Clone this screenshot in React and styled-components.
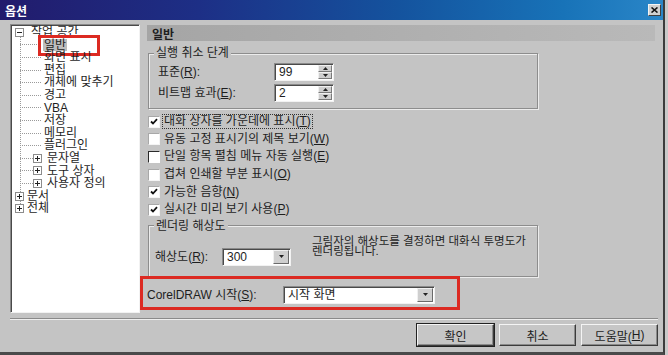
import React from 'react'
import styled, { createGlobalStyle } from 'styled-components'

const GlobalStyle = createGlobalStyle`
    html, body {
        margin: 0;
        padding: 0;
        background: #c9c9c9;
    }
    body {
        font-family: "Liberation Sans", "Noto Sans CJK KR", sans-serif;
        color: #1e1e1e;
    }
`

const Window = styled.div`
    width: 665px;
    height: 355px;
    box-sizing: border-box;
    background: #c4c4c4;
    border-right: 2px solid #3c3c3c;
    border-bottom: 3px solid #4a4a4a;
    display: flex;
    flex-direction: column;
    overflow: hidden;
`

const TitleBar = styled.div`
    height: 20px;
    flex: none;
    display: flex;
    align-items: center;
    justify-content: space-between;
    padding: 0 2px 0 5px;
    background: linear-gradient(90deg, #221b6c 0%, #1d2f86 30%, #14539e 60%, #1873b8 85%, #2a86c8 100%);
    color: #fff;
    font-size: 12px;
    font-weight: bold;
`

const CloseButton = styled.div`
    width: 13px;
    height: 12px;
    box-sizing: border-box;
    background: #d0d0d0;
    border: 1px solid;
    border-color: #f4f4f4 #404040 #404040 #f4f4f4;
    display: flex;
    align-items: center;
    justify-content: center;
`

const Body = styled.div`
    display: flex;
    padding: 4px 8px 0 10px;
`

const Tree = styled.div`
    width: 130px;
    height: 289px;
    flex: none;
    box-sizing: border-box;
    background: #fff;
    border: 1px solid;
    border-color: #8a8a8a #f2f2f2 #f2f2f2 #8a8a8a;
    box-shadow: inset 1px 1px 0 #4a4a4a;
    padding-top: 1px;
    font-size: 12px;
    line-height: 12.6px;
`

const TreeRow = styled.div`
    height: 12.6px;
    display: flex;
    align-items: center;
    padding-left: ${p => p.$indent}px;
    white-space: nowrap;
`

const TreeChildren = styled.div`
    position: relative;
    &::before {
        content: '';
        position: absolute;
        left: 9px;
        top: -2px;
        bottom: -20px;
        border-left: 1px dotted #9a9a9a;
    }
`

const Connector = styled.span`
    width: ${p => p.$width}px;
    flex: none;
    border-top: 1px dotted #9a9a9a;
`

const ExpanderBox = styled.span`
    width: 9px;
    height: 9px;
    flex: none;
    box-sizing: border-box;
    border: 1px solid #8c8c8c;
    background: #fff;
    display: flex;
    align-items: center;
    justify-content: center;
    position: relative;
    z-index: 1;
`

const TreeLabel = styled.span`
    margin-left: ${p => p.$gap}px;
    padding: 0 1px;
    position: relative;
    background: ${p => (p.$selected ? '#bdbdbd' : 'transparent')};
    ${p => p.$selected && `
        &::after {
            content: '';
            position: absolute;
            left: -5px;
            top: -4px;
            width: 62px;
            height: 21px;
            box-sizing: border-box;
            border: 3px solid #dc2a22;
        }
    `}
`

const Panel = styled.div`
    flex: 1;
    margin-left: 7px;
    font-size: 12px;
`

const Header = styled.div`
    height: 16px;
    margin-top: 1px;
    padding-left: 5px;
    display: flex;
    align-items: center;
    background: linear-gradient(90deg, #a5a5a5, #b9b9b9);
    font-weight: bold;
`

const Group = styled.fieldset`
    width: 390px;
    box-sizing: border-box;
    margin: ${p => p.$top}px 0 0 1px;
    padding: 0 0 ${p => p.$bottom}px ${p => p.$left}px;
    border: 1px solid #8d8d8d;
    box-shadow: 1px 1px 0 #ececec, inset 1px 1px 0 #ececec;
`

const Legend = styled.legend`
    padding: 0 2px;
    margin-left: ${p => p.$offset}px;
    background: #c4c4c4;
    line-height: 14px;
    font-size: 12px;
`

const FieldRow = styled.div`
    display: flex;
    align-items: ${p => (p.$top === 0 ? 'flex-start' : 'center')};
    margin-top: ${p => p.$top}px;
`

const FieldLabel = styled.span`
    width: ${p => p.$width}px;
    flex: none;
    line-height: 14px;
`

const Sunken = styled.div`
    width: ${p => p.$width}px;
    height: 18px;
    box-sizing: border-box;
    display: flex;
    background: #fff;
    border: 1px solid;
    border-color: #8a8a8a #f2f2f2 #f2f2f2 #8a8a8a;
    box-shadow: inset 1px 1px 0 #4a4a4a;
    padding: 1px 1px 0 1px;
`

const FieldValue = styled.span`
    flex: 1;
    padding-left: 3px;
    line-height: 15px;
    font-size: 12px;
`

const SpinBox = styled.div`
    width: 14px;
    flex: none;
    display: flex;
    flex-direction: column;
    margin-bottom: 1px;
`

const SpinHalf = styled.div`
    flex: 1;
    background: #cfcfcf;
    border: 1px solid;
    border-color: #f0f0f0 #7a7a7a #7a7a7a #f0f0f0;
    display: flex;
    align-items: center;
    justify-content: center;
`

const DropButton = styled.div`
    width: 14px;
    flex: none;
    margin-bottom: 1px;
    background: #cfcfcf;
    border: 1px solid;
    border-color: #f0f0f0 #6a6a6a #6a6a6a #f0f0f0;
    display: flex;
    align-items: center;
    justify-content: center;
`

const CheckList = styled.div`
    margin-top: 4px;
    margin-left: 1px;
`

const CheckRow = styled.div`
    height: 17.6px;
    display: flex;
    align-items: center;
`

const CheckBox = styled.span`
    width: 12px;
    height: 12px;
    flex: none;
    box-sizing: border-box;
    background: #fff;
    border: 1px solid;
    border-color: ${p => (p.$dark ? '#2a2a2a #fff #fff #2a2a2a' : '#a8a8a8 #f4f4f4 #f4f4f4 #a8a8a8')};
    display: flex;
    align-items: center;
    justify-content: center;
`

const CheckLabel = styled.span`
    margin-left: 3px;
    padding: 0 1px;
    line-height: 13px;
    outline: ${p => (p.$focus ? '1px dotted #333' : 'none')};
`

const Note = styled.div`
    margin: 3px 0 0 21px;
    font-size: 11.5px;
    line-height: 10.5px;
`

const StartRow = styled.div`
    width: 320px;
    box-sizing: border-box;
    margin: -1px 0 0 -7px;
    padding: 7px 0 3px 4px;
    border: 3px solid #dc2a22;
    display: flex;
    align-items: center;
`

const Footer = styled.div`
    margin-top: 5px;
`

const Separator = styled.div`
    margin: 0 5px 0 10px;
    border-top: 1px solid #8a8a8a;
    border-bottom: 1px solid #eeeeee;
`

const ButtonBar = styled.div`
    display: flex;
    justify-content: flex-end;
    gap: 5px;
    margin-top: 4px;
    padding-right: 5px;
`

const Button = styled.div`
    width: 77px;
    height: 22px;
    box-sizing: border-box;
    display: flex;
    align-items: center;
    justify-content: center;
    background: #c6c6c6;
    border: 1px solid;
    border-color: #f4f4f4 #3c3c3c #3c3c3c #f4f4f4;
    box-shadow: inset -1px -1px 0 #8a8a8a;
    font-size: 12px;
    outline: ${p => (p.$default ? '1px solid #222' : 'none')};
`

const Check = () => (
    <svg width="8" height="8" viewBox="0 0 8 8">
        <path d="M1 3.5 L3 5.5 L7 1.2" fill="none" stroke="#111" strokeWidth="1.8" />
    </svg>
)

const Arrow = ({ up }) => (
    <svg width="5" height="3" viewBox="0 0 5 3">
        <path d={up ? 'M0 3 L2.5 0 L5 3 Z' : 'M0 0 L5 0 L2.5 3 Z'} fill="#222" />
    </svg>
)

const Expander = ({ open }) => (
    <ExpanderBox>
        <svg width="5" height="5" viewBox="0 0 5 5">
            <path d={open ? 'M0 2.5 H5' : 'M0 2.5 H5 M2.5 0 V5'} stroke="#222" strokeWidth="1" />
        </svg>
    </ExpanderBox>
)

const Spin = ({ value }) => (
    <Sunken $width={60}>
        <FieldValue>{value}</FieldValue>
        <SpinBox>
            <SpinHalf><Arrow up /></SpinHalf>
            <SpinHalf><Arrow /></SpinHalf>
        </SpinBox>
    </Sunken>
)

const Combo = ({ value, width }) => (
    <Sunken $width={width}>
        <FieldValue>{value}</FieldValue>
        <DropButton><Arrow /></DropButton>
    </Sunken>
)

const workspaceItems = [
    { label: '일반', selected: true },
    { label: '화면 표시' },
    { label: '편집' },
    { label: '개체에 맞추기' },
    { label: '경고' },
    { label: 'VBA' },
    { label: '저장' },
    { label: '메모리' },
    { label: '플러그인' },
    { label: '문자열', folder: true },
    { label: '도구 상자', folder: true },
    { label: '사용자 정의', folder: true },
]

const options = [
    { text: '대화 상자를 가운데에 표시', key: 'T', checked: true, focus: true },
    { text: '유동 고정 표시기의 제목 보기', key: 'W' },
    { text: '단일 항목 펼침 메뉴 자동 실행', key: 'E', dark: true },
    { text: '겹쳐 인쇄할 부분 표시', key: 'O' },
    { text: '가능한 음향', key: 'N', checked: true },
    { text: '실시간 미리 보기 사용', key: 'P', checked: true },
]

const Mnemonic = ({ text, k, suffix = '' }) => (
    <>{text}(<u>{k}</u>){suffix}</>
)

const App = () => {
    return (
        <Window>
            <GlobalStyle />
            <TitleBar>
                <span>옵션</span>
                <CloseButton>
                    <svg width="7" height="6" viewBox="0 0 7 6">
                        <path d="M0.5 0.5 L6.5 5.5 M6.5 0.5 L0.5 5.5" stroke="#111" strokeWidth="1.6" />
                    </svg>
                </CloseButton>
            </TitleBar>
            <Body>
                <Tree>
                    <TreeRow $indent={4}>
                        <Expander open />
                        <TreeLabel $gap={6}>작업 공간</TreeLabel>
                    </TreeRow>
                    <TreeChildren>
                        {workspaceItems.map(item => (
                            <TreeRow key={item.label} $indent={9}>
                                {item.folder ? (
                                    <>
                                        <Connector $width={13} />
                                        <Expander />
                                        <TreeLabel $gap={4}>{item.label}</TreeLabel>
                                    </>
                                ) : (
                                    <>
                                        <Connector $width={21} />
                                        <TreeLabel $gap={2} $selected={item.selected}>{item.label}</TreeLabel>
                                    </>
                                )}
                            </TreeRow>
                        ))}
                    </TreeChildren>
                    <TreeRow $indent={4}>
                        <Expander />
                        <TreeLabel $gap={2}>문서</TreeLabel>
                    </TreeRow>
                    <TreeRow $indent={4}>
                        <Expander />
                        <TreeLabel $gap={2}>전체</TreeLabel>
                    </TreeRow>
                </Tree>

                <Panel>
                    <Header>일반</Header>

                    <Group $top={5} $left={9} $bottom={6}>
                        <Legend $offset={-4}>실행 취소 단계</Legend>
                        <FieldRow $top={3}>
                            <FieldLabel $width={116}><Mnemonic text="표준" k="R" suffix=":" /></FieldLabel>
                            <Spin value="99" />
                        </FieldRow>
                        <FieldRow $top={3}>
                            <FieldLabel $width={116}><Mnemonic text="비트맵 효과" k="E" suffix=":" /></FieldLabel>
                            <Spin value="2" />
                        </FieldRow>
                    </Group>

                    <CheckList>
                        {options.map(opt => (
                            <CheckRow key={opt.key}>
                                <CheckBox $dark={opt.dark}>{opt.checked && <Check />}</CheckBox>
                                <CheckLabel $focus={opt.focus}><Mnemonic text={opt.text} k={opt.key} /></CheckLabel>
                            </CheckRow>
                        ))}
                    </CheckList>

                    <Group $top={0} $left={6} $bottom={10}>
                        <Legend $offset={-1}>렌더링 해상도</Legend>
                        <FieldRow $top={0}>
                            <FieldRow $top={15}>
                                <FieldLabel $width={67}><Mnemonic text="해상도" k="R" suffix=":" /></FieldLabel>
                                <Combo value="300" width={69} />
                            </FieldRow>
                            <Note>
                                그림자의 해상도를 결정하면 대화식 투명도가<br />
                                렌더링됩니다.
                            </Note>
                        </FieldRow>
                    </Group>

                    <StartRow>
                        <FieldLabel $width={136}><Mnemonic text="CorelDRAW 시작" k="S" suffix=":" /></FieldLabel>
                        <Combo value="시작 화면" width={152} />
                    </StartRow>
                </Panel>
            </Body>
            <Footer>
                <Separator />
                <ButtonBar>
                    <Button $default>확인</Button>
                    <Button>취소</Button>
                    <Button><Mnemonic text="도움말" k="H" /></Button>
                </ButtonBar>
            </Footer>
        </Window>
    )
}

export default App
